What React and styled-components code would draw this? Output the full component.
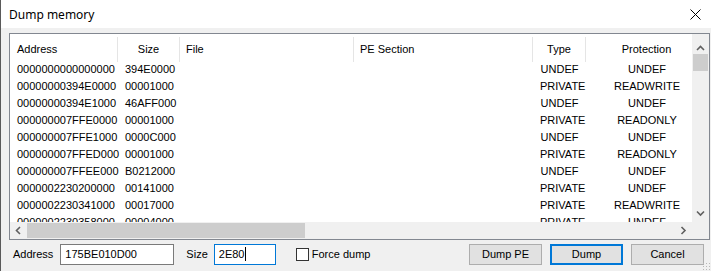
import React from "react";
import styled, { createGlobalStyle, css } from "styled-components";

const Global = createGlobalStyle`
  html, body { margin: 0; padding: 0; }
  body {
    width: 711px; height: 271px; overflow: hidden;
    background: #f0f0f0;
    font-family: "Liberation Sans", Arial, sans-serif;
    font-size: 11px; color: #000;
  }
`;

const Window = styled.div`
  position: relative;
  width: 711px; height: 271px;
  display: flex; flex-direction: column;
  background: #f0f0f0;
  box-sizing: border-box;
  border-left: 1px solid #5a5a5a;
`;

const TitleBar = styled.div`
  height: 28px; background: #fff;
  display: flex; align-items: center; justify-content: space-between;
  padding: 0 0 0 8px;
  font-family: "Noto Sans", "Liberation Sans", sans-serif;
  font-size: 12px; color: #000;
`;

const CloseBtn = styled.div`
  width: 30px; height: 28px;
  display: flex; align-items: center; justify-content: center;
  margin-right: 1px;
`;

const Body = styled.div`
  flex: 1; display: flex; flex-direction: column;
  padding: 5px 1px 0 8px;
`;

const ListBox = styled.div`
  height: 207px; box-sizing: border-box;
  border: 1px solid #828790; background: #fff;
  display: grid;
  grid-template-columns: 1fr 17px;
  grid-template-rows: 1fr 17px;
  overflow: hidden;
`;

const Table = styled.div`
  overflow: hidden;
`;

const Row = styled.div`
  display: grid;
  grid-template-columns: 108px 62px 174px 179px 53px 122px;
  height: ${p => (p.$header ? "27px" : "17px")};
  align-items: center;
  white-space: nowrap;
`;

const Cell = styled.div`
  box-sizing: border-box;
  padding: 0 ${p => (p.$header ? 6 : 7)}px;
  text-align: ${p => p.$align || "left"};
  line-height: 17px;
  ${p => p.$header && css`
    height: 25px; margin-top: 3px; line-height: 24px;
    border-right: 1px solid #e5e5e5;
  `}
  ${p => p.$first && css`padding-left: 7px;`}
`;

const VScroll = styled.div`
  background: #f0f0f0;
  display: flex; flex-direction: column;
`;

const HScroll = styled.div`
  background: #f0f0f0;
  display: flex; align-items: center;
`;

const Corner = styled.div`background: #f0f0f0;`;

const ArrowBtn = styled.div`
  display: flex; justify-content: center;
  align-items: ${p => (p.$bottom ? "flex-end" : "center")};
  box-sizing: border-box;
  padding-bottom: ${p => (p.$bottom ? 2 : 0)}px;
  width: ${p => p.$w || 17}px; height: ${p => p.$h || 17}px;
  flex-shrink: 0;
`;

const VThumb = styled.div`
  height: 17px; margin: 0 1px; background: #cdcdcd;
`;

const Track = styled.div`flex: 1;`;

const HThumb = styled.div`
  width: 278px; height: 15px; margin-top: -1px; background: #cdcdcd;
`;

const BottomBar = styled.div`
  flex: 1; display: flex; align-items: center;
  padding: 0 0 3px 12px;
`;

const Label = styled.span`
  margin-right: ${p => p.$mr}px;
`;

const Input = styled.div`
  box-sizing: border-box;
  width: ${p => p.$w}px; height: 21px;
  border: 1px solid ${p => (p.$focus ? "#0078d7" : "#7a7a7a")};
  background: #fff;
  display: flex; align-items: center;
  padding-left: 4px;
  margin-right: ${p => p.$mr}px;
`;

const Caret = styled.span`
  display: inline-block; width: 1px; height: 14px; background: #000; margin-left: 1px;
`;

const CheckWrap = styled.label`
  display: flex; align-items: center; gap: 3px;
`;

const CheckBox = styled.span`
  box-sizing: border-box;
  width: 13px; height: 13px; border: 1px solid #333; background: #fff;
`;

const Buttons = styled.div`
  margin-left: auto; display: flex; gap: 8px; margin-right: 7px;
`;

const Button = styled.div`
  box-sizing: border-box;
  width: 73px; height: 21px;
  background: #e1e1e1;
  border: ${p => (p.$default ? "2px solid #0078d7" : "1px solid #adadad")};
  display: flex; align-items: center; justify-content: center;
`;

const Grip = styled.div`
  position: absolute; right: 1px; bottom: 1px; width: 8px; height: 8px;
  background-image: radial-gradient(circle, #b8b8b8 0.8px, transparent 1px);
  background-size: 3px 3px;
`;

const Chevron = ({ dir }) => {
  const paths = {
    up: "M1 5 L4.5 1.5 L8 5",
    down: "M1 1.5 L4.5 5 L8 1.5",
    left: "M5 1 L1.5 4.5 L5 8",
    right: "M1.5 1 L5 4.5 L1.5 8",
  };
  const vert = dir === "up" || dir === "down";
  return (
    <svg width={vert ? 9 : 7} height={vert ? 7 : 9} viewBox={vert ? "0 0 9 7" : "0 0 7 9"}>
      <path d={paths[dir]} fill="none" stroke="#606060" strokeWidth="1.6" />
    </svg>
  );
};

const rows = [
  ["0000000000000000", "394E0000", "UNDEF", "UNDEF"],
  ["00000000394E0000", "00001000", "PRIVATE", "READWRITE"],
  ["00000000394E1000", "46AFF000", "UNDEF", "UNDEF"],
  ["000000007FFE0000", "00001000", "PRIVATE", "READONLY"],
  ["000000007FFE1000", "0000C000", "UNDEF", "UNDEF"],
  ["000000007FFED000", "00001000", "PRIVATE", "READONLY"],
  ["000000007FFEE000", "B0212000", "UNDEF", "UNDEF"],
  ["0000002230200000", "00141000", "PRIVATE", "UNDEF"],
  ["0000002230341000", "00017000", "PRIVATE", "READWRITE"],
  ["0000002230358000", "00004000", "PRIVATE", "UNDEF"],
];

export default function App() {
  return (
    <>
      <Global />
      <Window>
        <TitleBar>
          <span>Dump memory</span>
          <CloseBtn>
            <svg width="11" height="11" viewBox="0 0 11 11">
              <path d="M0.5 0.5 L10.5 10.5 M10.5 0.5 L0.5 10.5" stroke="#000" strokeWidth="1" />
            </svg>
          </CloseBtn>
        </TitleBar>
        <Body>
          <ListBox>
            <Table>
              <Row $header>
                <Cell $header $first>Address</Cell>
                <Cell $header $align="center">Size</Cell>
                <Cell $header>File</Cell>
                <Cell $header>PE Section</Cell>
                <Cell $header $align="center">Type</Cell>
                <Cell $header $align="center">Protection</Cell>
              </Row>
              {rows.map((r, i) => (
                <Row key={i}>
                  <Cell $first>{r[0]}</Cell>
                  <Cell $align="center">{r[1]}</Cell>
                  <Cell />
                  <Cell />
                  <Cell $align="center">{r[2]}</Cell>
                  <Cell $align="center">{r[3]}</Cell>
                </Row>
              ))}
            </Table>
            <VScroll>
              <ArrowBtn $h={20} $bottom>
                <Chevron dir="up" />
              </ArrowBtn>
              <VThumb />
              <Track />
              <ArrowBtn>
                <Chevron dir="down" />
              </ArrowBtn>
            </VScroll>
            <HScroll>
              <ArrowBtn>
                <Chevron dir="left" />
              </ArrowBtn>
              <HThumb />
              <Track />
              <ArrowBtn>
                <Chevron dir="right" />
              </ArrowBtn>
            </HScroll>
            <Corner />
          </ListBox>
        </Body>
        <BottomBar>
          <Label $mr={7}>Address</Label>
          <Input $w={114} $mr={12}>175BE010D00</Input>
          <Label $mr={6}>Size</Label>
          <Input $w={62} $mr={20} $focus>
            2E80<Caret />
          </Input>
          <CheckWrap>
            <CheckBox />
            <span>Force dump</span>
          </CheckWrap>
          <Buttons>
            <Button>Dump PE</Button>
            <Button $default>Dump</Button>
            <Button>Cancel</Button>
          </Buttons>
        </BottomBar>
        <Grip />
      </Window>
    </>
  );
}
